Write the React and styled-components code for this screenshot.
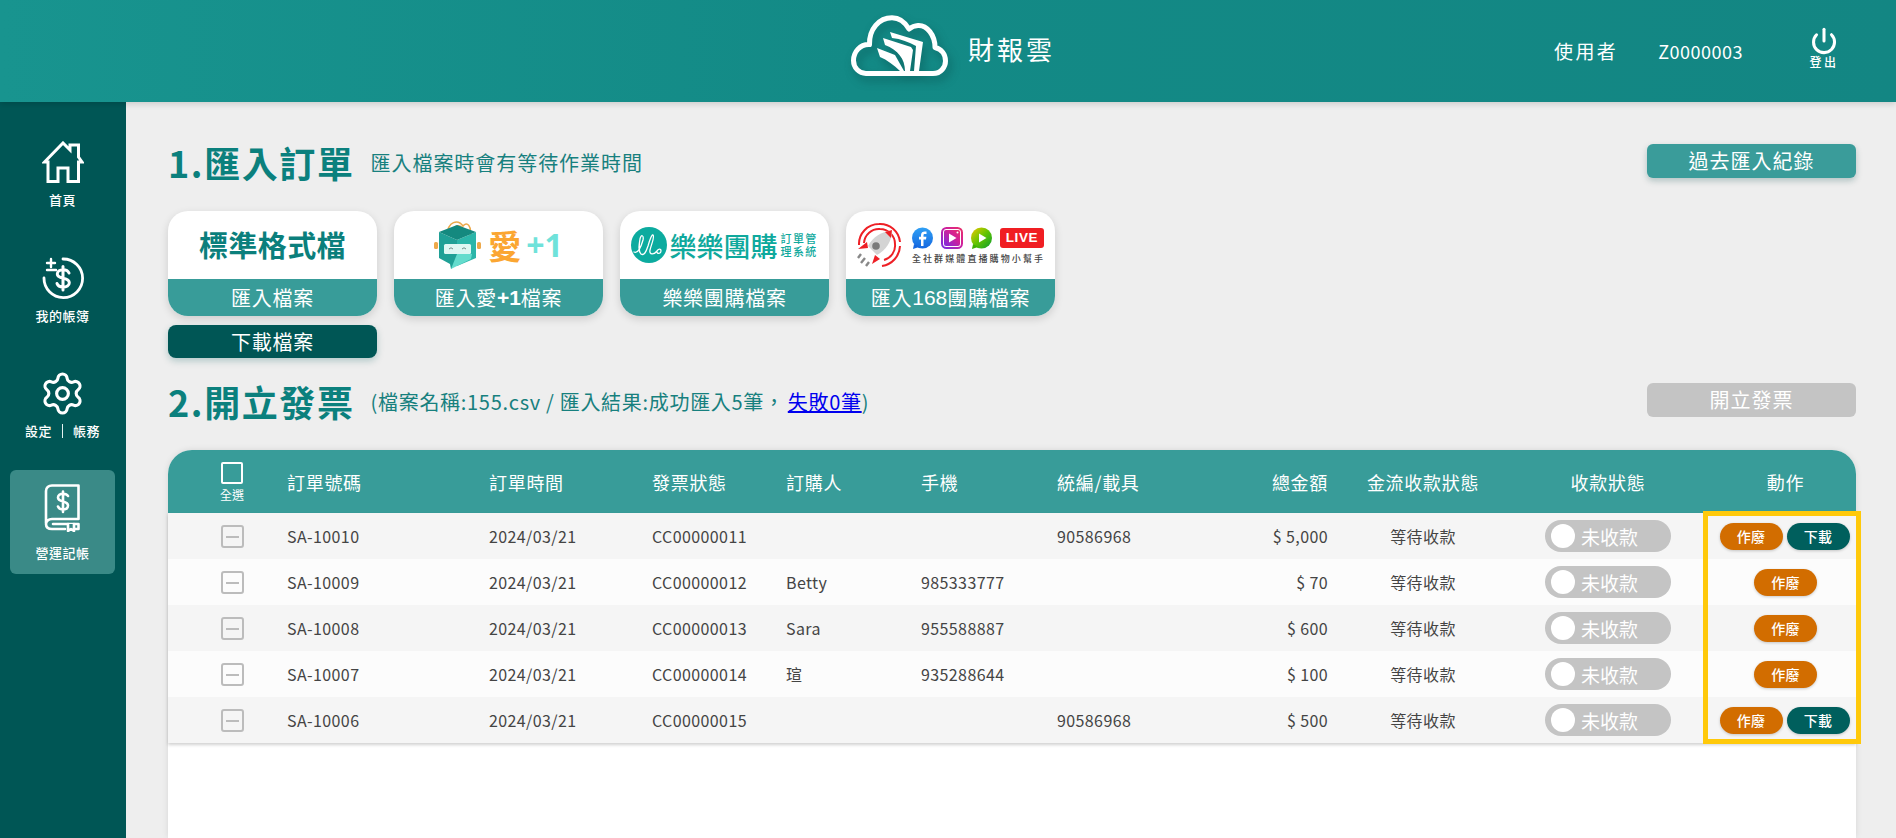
import React from 'react';
import styled, { createGlobalStyle } from 'styled-components';
import { Settings, Power } from 'lucide-react';

const Global = createGlobalStyle`
  html, body { margin: 0; padding: 0; height: 100%; overflow: hidden; }
  body { font-family: "Noto Sans CJK TC", "Noto Sans", sans-serif; background: #eeeeee; color: #444; }
  * { box-sizing: border-box; }
`;

const Page = styled.div`
  height: 100vh; display: flex; flex-direction: column; overflow: hidden;
`;
const Header = styled.header`
  height: 102px; flex: none; position: relative; z-index: 2;
  display: grid; grid-template-columns: 1fr auto 1fr; align-items: center;
  background: linear-gradient(90deg, #18948f 0%, #138a86 45%, #138683 100%);
  box-shadow: 0 2px 6px rgba(0,0,0,.15);
  color: #fff;
`;
const Brand = styled.div`
  grid-column: 2; display: flex; align-items: center; gap: 20px; margin-left: 10px;
`;
const BrandName = styled.div`
  font-size: 26px; letter-spacing: 3px; line-height: 1; margin-top: -4px;
`;
const CloudSvg = styled.svg`
  width: 97px; height: 62px; margin-top: -10px;
  filter: drop-shadow(3px 5px 5px rgba(0,50,50,.35));
`;
const UserArea = styled.div`
  grid-column: 3; display: flex; align-items: center; justify-content: flex-end; padding-right: 58px;
`;
const UserLabel = styled.div`font-size: 19px; letter-spacing: 2.4px; margin-right: 40px; margin-top: -1px;`;
const UserId = styled.div`font-size: 18px; letter-spacing: .5px; margin-right: 67px; margin-top: -1px;`;
const Logout = styled.div`
  display: flex; flex-direction: column; align-items: center; width: 28px; margin-top: -6px;
`;
const LogoutText = styled.div`font-size: 12px; letter-spacing: 2.6px; line-height: 14px; white-space: nowrap; font-weight: 500;`;

const Body = styled.div`flex: 1; display: flex; min-height: 0;`;
const Sidebar = styled.nav`
  width: 126px; flex: none; background: #005655; padding: 20px 11px 0 10px;
  display: flex; flex-direction: column; gap: 12px;
`;
const NavItem = styled.div`
  height: 104px; border-radius: 6px; color: #fff;
  background: ${p => p.$active ? '#3a8a87' : 'transparent'};
  display: flex; flex-direction: column; align-items: center; justify-content: center; gap: ${p => p.$active ? 13 : 9}px;
`;
const NavLabel = styled.div`
  font-size: 13px; line-height: 16px; letter-spacing: .5px; font-weight: 500; display: flex; align-items: center; white-space: nowrap;
`;
const NavDivider = styled.span`
  width: 1px; height: 14px; background: #e4f2f1; margin: 0 10px;
`;
const GearIcon = styled(Settings)`
  margin: -4px 0 -3px;
`;

const Main = styled.main`
  flex: 1; min-width: 0; padding: 42px 40px 0 42px; display: flex; flex-direction: column;
`;
const SectionRow = styled.div`
  display: flex; align-items: center; height: 34px;
  & + & { margin-top: 0; }
`;
const SecondRow = styled(SectionRow)`
  margin-top: 25px;
`;
const SectionTitle = styled.h2`
  margin: 0 16px 0 0; font-size: 36px; line-height: 40px; font-weight: 700; color: #0b807d; letter-spacing: 1.6px; white-space: nowrap; position: relative; top: 1px;
`;
const SectionNote = styled.div`
  font-size: 20px; letter-spacing: .95px; color: #17807e; white-space: nowrap; position: relative; top: 1px;
`;
const SectionNoteTight = styled(SectionNote)`
  letter-spacing: .7px;
`;
const NoteLink = styled.a`
  color: #0000ee; text-decoration: underline; margin-left: 3px;
`;
const RightButton = styled.div`
  margin-left: auto; width: 209px; height: 34px; border-radius: 6px;
  background: ${p => p.$disabled ? '#c4c4c4' : '#3a9c9a'};
  box-shadow: ${p => p.$disabled ? 'none' : '0 3px 6px rgba(0,70,70,.25)'};
  color: #fff; font-size: 20px; letter-spacing: 1px; display: flex; align-items: center; justify-content: center; line-height: 1;
`;
const Cards = styled.div`
  margin-top: 33px; display: flex; gap: 17px; height: 147px; flex: none;
`;
const CardCol = styled.div`
  width: 209px; display: flex; flex-direction: column; gap: 9px;
`;
const Card = styled.div`
  height: 105px; border-radius: 20px; overflow: hidden; background: #fff;
  box-shadow: 0 3px 8px rgba(0,0,0,.14); display: flex; flex-direction: column;
`;
const CardLogo = styled.div`
  height: 68px; flex: none; display: flex; align-items: center; justify-content: center;
`;
const CardBand = styled.div`
  flex: 1; background: #389c99; color: #fff; font-size: 20px; letter-spacing: .7px; line-height: 1;
  display: flex; align-items: center; justify-content: center; white-space: pre;
`;
const BandLatin = styled.span`
  font-family: "Liberation Sans", sans-serif; font-weight: ${p => p.$bold ? 700 : 400}; font-size: 21px; letter-spacing: 0;
`;
const DownloadBtn = styled.div`
  height: 33px; background: #005655; color: #fff; border-radius: 8px; font-size: 20px; letter-spacing: .7px; line-height: 1;
  display: flex; align-items: center; justify-content: center; box-shadow: 0 3px 7px rgba(0,90,90,.25);
`;
const StdTitle = styled.div`
  font-size: 29px; font-weight: 700; letter-spacing: .4px; color: #0b7f7c; line-height: 1; margin-top: -2px;
`;
const AiWord = styled.span`
  font-size: 33px; font-weight: 700; color: #fba632; line-height: 1; margin-left: 7px;
`;
const PlusOne = styled.span`
  font-size: 32px; font-weight: 700; color: #6fe2da; line-height: 1; margin-left: 5px; font-family: "Noto Sans", sans-serif; letter-spacing: 0;
`;
const LeleWord = styled.span`
  font-size: 27px; font-weight: 500; color: #0fa99d; line-height: 1; margin-left: 3px; white-space: nowrap;
`;
const LeleSmall = styled.span`
  font-size: 11px; font-weight: 500; line-height: 13px; letter-spacing: 1.4px; color: #0fa99d; margin-left: 3px; width: 38px;
`;
const SocialWrap = styled.div`
  display: flex; flex-direction: column; margin-left: 9px; gap: 3px;
`;
const SocialIcons = styled.div`display: flex; align-items: center; gap: 7px;`;
const LiveTag = styled.span`
  background: #f01e23; color: #fff; font: 700 13.5px/20px "Liberation Sans", sans-serif; letter-spacing: .6px; width: 44px; height: 20px; border-radius: 3px; text-align: center;
`;
const SocialText = styled.div`
  font-size: 9px; letter-spacing: 2.1px; color: #444; line-height: 11px; white-space: nowrap; font-weight: 500; padding-left: 1px;
`;
const LogoPart = styled.svg`flex: none;`;

const TableBox = styled.div`
  margin-top: 33px; flex: 1; position: relative; background: #fff; border-radius: 24px 24px 0 0;
  box-shadow: 0 0 6px rgba(0,0,0,.1);
`;
const Cols = '119px 202px 163px 134px 135px 136px 143px 128px 190px 180px 158px';
const HeadRow = styled.div`
  height: 63px; background: #389c99; border-radius: 24px 24px 0 0; color: #fff;
  display: grid; grid-template-columns: ${Cols}; align-items: center; font-size: 18px; letter-spacing: .7px;
`;
const Row = styled.div`
  height: 46px; display: grid; grid-template-columns: ${Cols}; align-items: center;
  font-size: 16px; letter-spacing: .4px; color: #444; background: ${p => p.$odd ? '#f5f5f5' : '#fcfcfc'};
`;
const Rows = styled.div`box-shadow: 0 2px 3px rgba(0,0,0,.18);`;
const Cell = styled.div`
  white-space: nowrap;
  text-align: ${p => p.$align || 'left'};
  padding-left: ${p => p.$pl || 0}px;
  ${p => p.$flex ? 'display:flex;justify-content:center;gap:4px;' : ''}
`;
const HeadCheckCell = styled.div`
  display: flex; flex-direction: column; align-items: center; padding-left: 9px; margin-top: 1px;
`;
const HeadBox = styled.span`
  width: 22px; height: 22px; border: 2px solid #fff; border-radius: 2px; display: block;
`;
const HeadCheckText = styled.span`
  font-size: 12px; line-height: 16px; letter-spacing: 0; margin-top: 3px;
`;
const CheckCell = styled.div`display: flex; justify-content: center; padding-left: 9px; padding-top: 1px;`;
const MinusBox = styled.span`
  width: 23px; height: 23px; border: 2px solid #bcbcbc; border-radius: 3px; display: flex; align-items: center; justify-content: center;
  &::after { content: ''; width: 13px; height: 2px; background: #bcbcbc; }
`;
const Toggle = styled.div`
  width: 126px; height: 32px; border-radius: 16px; background: #c4c4c4; color: #fff; margin: 0 auto;
  display: flex; align-items: center; padding-left: 6px; font-size: 19px; letter-spacing: 0;
`;
const Knob = styled.span`
  width: 24px; height: 24px; border-radius: 50%; background: #fff; margin-right: 6px; flex: none;
`;
const ActBtn = styled.div`
  width: 63px; height: 27px; border-radius: 14px; color: #fff; font-size: 14px; letter-spacing: .3px; font-weight: 500;
  background: ${p => p.$kind === 'dl' ? '#005f5d' : '#d26d00'};
  display: flex; align-items: center; justify-content: center; line-height: 1;
  box-shadow: 0 1px 3px rgba(0,0,0,.2);
`;
const Frame = styled.div`
  position: absolute; left: 1535px; top: 61px; width: 158px; height: 233px; border: 5px solid #ffc90a; pointer-events: none;
`;

const rows = [
  { id: 'SA-10010', inv: 'CC00000011', buyer: '', phone: '', tax: '90586968', amt: '$ 5,000', dl: true },
  { id: 'SA-10009', inv: 'CC00000012', buyer: 'Betty', phone: '985333777', tax: '', amt: '$ 70' },
  { id: 'SA-10008', inv: 'CC00000013', buyer: 'Sara', phone: '955588887', tax: '', amt: '$ 600' },
  { id: 'SA-10007', inv: 'CC00000014', buyer: '瑄', phone: '935288644', tax: '', amt: '$ 100' },
  { id: 'SA-10006', inv: 'CC00000015', buyer: '', phone: '', tax: '90586968', amt: '$ 500', dl: true },
];

const CloudLogo = () => (
  <CloudSvg viewBox="0 0 97 62" fill="none">
    <path d="M15 58.5 H82 C90 58.5 94.5 52 94.5 46 C94.5 39 90 34 84 32.5 C84 20 76 10 67 10.5 C63.5 10.7 60.5 12 58 14 C54 7 48 2.7 41 2.7 C28 2.7 18 14 18.5 29.5 C9 29 2.5 37 2.5 45.5 C2.5 52.5 8 58.5 15 58.5 Z" stroke="#fff" strokeWidth="5" strokeLinejoin="round" />
    <path d="M39 17 L72 27 L68 56 H63 L65 31 C58 27 50 24 41 23 Z" fill="#fff" />
    <path d="M32 23 L60 32 L62 35 L59 56 H54 C54 44 47 35 34 30 Z" fill="#fff" />
    <path d="M26 33 L44 40 L53 56 H49 C43 50 36 45 29 42 Z" fill="#fff" />
  </CloudSvg>
);

const HomeIcon = () => (
  <svg width="42" height="42" viewBox="0 0 42 42" fill="none" stroke="#fff" strokeWidth="3" strokeLinejoin="miter">
    <path d="M6 40.5 V21 H2.5 L21 2 L28 9 V4 H36.5 V16 L40 21 H36.5 V40.5 H26 V27 H16 V40.5 Z" />
  </svg>
);
const MoneyIcon = () => (
  <svg width="42" height="42" viewBox="0 0 42 42" fill="none" stroke="#fff" strokeWidth="2.8" strokeLinecap="round">
    <path d="M21 2 A19.3 19.3 0 1 1 2 21" />
    <path d="M9 2 V10 M5 6 H13 M5 13 H14" strokeWidth="2.4" />
    <path d="M21 9.5 V33 M27 16 C26 13.5 24 12.7 21 12.7 C17.5 12.7 15.3 14.5 15.3 17 C15.3 23 27.3 19.5 27.3 25.7 C27.3 28.5 24.5 30 21 30 C18 30 15.8 28.8 15 26.5" strokeWidth="3" />
  </svg>
);
const BookIcon = () => (
  <svg width="40" height="48" viewBox="0 0 40 48" fill="none" stroke="#fff" strokeWidth="2.6" strokeLinecap="round" strokeLinejoin="round">
    <path d="M3 39 V7 C3 3.5 5.5 1.5 9 1.5 H35.5 V35 H9 C5.5 35 3 37 3 40 C3 43.5 5.5 45 9 45 H22" />
    <path d="M10 40 H35.5 V45 M35.5 45 H30" />
    <path d="M25 40 V47 L28 45 L31 47 V40" fill="#3a8a87" />
    <path d="M20 7.5 V28 M25 12 C24 10 22.5 9.7 20 9.7 C17 9.7 15 11.3 15 13.5 C15 19 25 16 25 21.5 C25 24 23 25.5 20 25.5 C17.5 25.5 15.8 24.5 15 22.5" />
  </svg>
);
const BagRobot = () => (
  <svg width="47" height="50" viewBox="0 0 47 50">
    <path d="M13 15 C14 1 24 -1 29 6 C33 1 38 6 36 16 M17 15 C19 4 27 2 32 14" fill="none" stroke="#eda94b" strokeWidth="1.6" />
    <rect x="0" y="22" width="4" height="7" rx="1.5" fill="#eda94b" />
    <rect x="43" y="22" width="4" height="7" rx="1.5" fill="#eda94b" />
    <path d="M5 12 L23 20 V44 L17 49 L16 44 L5 38 Z" fill="#1fa096" />
    <path d="M23 20 L42 12 V38 L23 46 Z" fill="#2bb5a9" />
    <path d="M5 12 L23 5 L42 12 L23 20 Z" fill="#14897f" />
    <path d="M17 49 L23 34 H38 L37 39 Z" fill="#64dccd" />
    <rect x="10" y="24" width="27" height="10" rx="1.5" fill="#def7f3" />
    <path d="M15 29 Q17 26.5 19 29 M28 29 Q30 26.5 32 29" fill="none" stroke="#6f8f8a" strokeWidth="1" />
  </svg>
);
const LeleMark = () => (
  <LogoPart width="36" height="36" viewBox="0 0 36 36">
    <circle cx="18" cy="18" r="18" fill="#0cab9f" />
    <path d="M3 25 C7 27 10 20 12 13 C13 8 10 7 9 12 C8 18 7 24 10 27 C13 29 15 25 17 19 C19 12 21 7 22 8 C24 10 20 18 19 23 C18 28 23 28 26 24 C27 22 30 21 30 24 C30 27 26 27 26 25" fill="none" stroke="#fff" strokeWidth="1.3" strokeLinecap="round" />
  </LogoPart>
);
const Rocket = () => (
  <LogoPart width="46" height="46" viewBox="0 0 46 46" fill="none">
    <path d="M3 23 A20 20 0 0 1 23 2 A20 20 0 0 1 44 20 M44 24 A21 21 0 0 1 26 44" stroke="#ee2026" strokeWidth="2" />
    <path d="M8 21 A15 15 0 0 1 24 7 A15 15 0 0 1 39 22 A15 15 0 0 1 28 38" stroke="#ee2026" strokeWidth="2" />
    <path d="M34 9 C25 10 17 15 12 24 L21 33 C30 28 35 20 36 11 Z" fill="#d4d4d4" />
    <path d="M29 10 L36 8 L35 16 Z" fill="#ee2026" />
    <path d="M2 27 L11 20 L12 26 Z M16 42 L24 37 L19 33 Z" fill="#ee2026" />
    <circle cx="20" cy="24" r="3.8" fill="#7a7a7a" />
    <path d="M2 36 L5 32 M5 41 L9 36 M10 44 L13 40" stroke="#888" strokeWidth="2.4" />
  </LogoPart>
);
const FbIcon = () => (
  <svg width="23" height="23" viewBox="0 0 23 23">
    <defs><linearGradient id="fb" x1="0" y1="0" x2="0" y2="1"><stop offset="0" stopColor="#2fa0f5" /><stop offset="1" stopColor="#1668e0" /></linearGradient></defs>
    <circle cx="11.5" cy="11" r="10.5" fill="url(#fb)" />
    <path d="M3 17 L2 22 L8 20 Z" fill="#1668e0" />
    <path d="M12.5 19 V12.5 H15 L15.4 9.8 H12.5 V8.3 C12.5 7.4 12.9 6.9 14 6.9 H15.5 V4.6 C13 4 10 4.5 10 8 V9.8 H8 V12.5 H10 V19 Z" fill="#fff" />
  </svg>
);
const IgIcon = () => (
  <svg width="22" height="22" viewBox="0 0 22 22">
    <defs><linearGradient id="ig" x1="0" y1="1" x2="1" y2="0"><stop offset="0" stopColor="#7a2ee0" /><stop offset=".6" stopColor="#d0209a" /><stop offset="1" stopColor="#e8306a" /></linearGradient></defs>
    <rect x="1" y="1" width="20" height="20" rx="4.5" fill="none" stroke="url(#ig)" strokeWidth="2" />
    <rect x="3" y="3" width="16" height="16" rx="2" fill="url(#ig)" />
    <path d="M8 6.5 V15.5 L15.5 11 Z" fill="#fff" />
    <circle cx="16.5" cy="5.5" r="1" fill="#fff" />
  </svg>
);
const PlayIcon = () => (
  <svg width="23" height="23" viewBox="0 0 23 23">
    <defs><linearGradient id="pl" x1="0" y1="0" x2="1" y2="1"><stop offset="0" stopColor="#f0c800" /><stop offset=".5" stopColor="#62c400" /><stop offset="1" stopColor="#0a9c30" /></linearGradient></defs>
    <circle cx="11.5" cy="11" r="10.5" fill="url(#pl)" />
    <path d="M3 17 L2 22 L8 20 Z" fill="#3fb000" />
    <path d="M9 6.5 V15.5 L16.5 11 Z" fill="#fff" />
  </svg>
);

const Action = ({ dl }) => (
  <Cell $flex $pl={dl ? 15 : 17}>
    <ActBtn>作廢</ActBtn>
    {dl && <ActBtn $kind="dl">下載</ActBtn>}
  </Cell>
);

export default function App() {
  return (
    <Page>
      <Global />
      <Header>
        <Brand>
          <CloudLogo />
          <BrandName>財報雲</BrandName>
        </Brand>
        <UserArea>
          <UserLabel>使用者</UserLabel>
          <UserId>Z0000003</UserId>
          <Logout>
            <Power size={28} strokeWidth={2.6} color="#fff" />
            <LogoutText>登出</LogoutText>
          </Logout>
        </UserArea>
      </Header>
      <Body>
        <Sidebar>
          <NavItem><HomeIcon /><NavLabel>首頁</NavLabel></NavItem>
          <NavItem><MoneyIcon /><NavLabel>我的帳簿</NavLabel></NavItem>
          <NavItem>
            <GearIcon size={47} strokeWidth={1.6} color="#fff" />
            <NavLabel>設定<NavDivider />帳務</NavLabel>
          </NavItem>
          <NavItem $active><BookIcon /><NavLabel>營運記帳</NavLabel></NavItem>
        </Sidebar>
        <Main>
          <SectionRow>
            <SectionTitle>1.匯入訂單</SectionTitle>
            <SectionNote>匯入檔案時會有等待作業時間</SectionNote>
            <RightButton>過去匯入紀錄</RightButton>
          </SectionRow>
          <Cards>
            <CardCol>
              <Card>
                <CardLogo><StdTitle>標準格式檔</StdTitle></CardLogo>
                <CardBand>匯入檔案</CardBand>
              </Card>
              <DownloadBtn>下載檔案</DownloadBtn>
            </CardCol>
            <CardCol>
              <Card>
                <CardLogo><BagRobot /><AiWord>愛</AiWord><PlusOne>+1</PlusOne></CardLogo>
                <CardBand>匯入愛<BandLatin $bold>+1</BandLatin>檔案</CardBand>
              </Card>
            </CardCol>
            <CardCol>
              <Card>
                <CardLogo><LeleMark /><LeleWord>樂樂團購</LeleWord><LeleSmall>訂單管理系統</LeleSmall></CardLogo>
                <CardBand>樂樂團購檔案</CardBand>
              </Card>
            </CardCol>
            <CardCol>
              <Card>
                <CardLogo>
                  <Rocket />
                  <SocialWrap>
                    <SocialIcons><FbIcon /><IgIcon /><PlayIcon /><LiveTag>LIVE</LiveTag></SocialIcons>
                    <SocialText>全社群媒體直播購物小幫手</SocialText>
                  </SocialWrap>
                </CardLogo>
                <CardBand>匯入<BandLatin>168</BandLatin>團購檔案</CardBand>
              </Card>
            </CardCol>
          </Cards>
          <SecondRow>
            <SectionTitle>2.開立發票</SectionTitle>
            <SectionNoteTight>(檔案名稱:155.csv / 匯入結果:成功匯入5筆，<NoteLink>失敗0筆</NoteLink>)</SectionNoteTight>
            <RightButton $disabled>開立發票</RightButton>
          </SecondRow>
          <TableBox>
            <HeadRow>
              <HeadCheckCell><HeadBox /><HeadCheckText>全選</HeadCheckText></HeadCheckCell>
              <Cell>訂單號碼</Cell>
              <Cell>訂單時間</Cell>
              <Cell>發票狀態</Cell>
              <Cell>訂購人</Cell>
              <Cell>手機</Cell>
              <Cell>統編/載具</Cell>
              <Cell $align="right">總金額</Cell>
              <Cell $align="center">金流收款狀態</Cell>
              <Cell $align="center">收款狀態</Cell>
              <Cell $align="center" $pl={17}>動作</Cell>
            </HeadRow>
            <Rows>
              {rows.map((r, i) => (
                <Row key={r.id} $odd={i % 2 === 0}>
                  <CheckCell><MinusBox /></CheckCell>
                  <Cell>{r.id}</Cell>
                  <Cell>2024/03/21</Cell>
                  <Cell>{r.inv}</Cell>
                  <Cell>{r.buyer}</Cell>
                  <Cell>{r.phone}</Cell>
                  <Cell>{r.tax}</Cell>
                  <Cell $align="right">{r.amt}</Cell>
                  <Cell $align="center">等待收款</Cell>
                  <Cell><Toggle><Knob />未收款</Toggle></Cell>
                  <Action dl={r.dl} />
                </Row>
              ))}
            </Rows>
            <Frame />
          </TableBox>
        </Main>
      </Body>
    </Page>
  );
}
